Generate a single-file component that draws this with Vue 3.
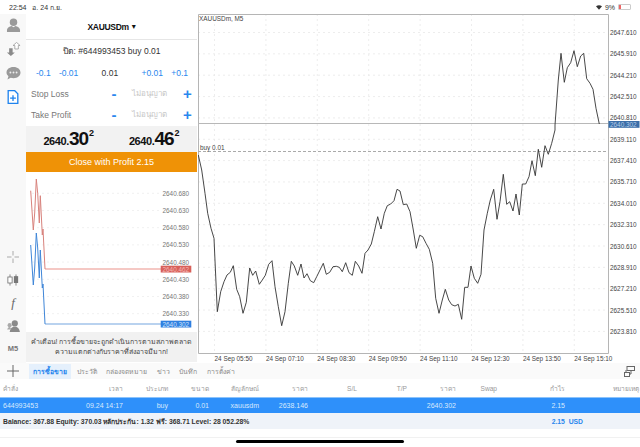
<script setup>
const z6 = [[10,75],[20,120],[30,190],[38,250],[48,295],[57,325],[67,545],[77,485],[87,455],[96,435],[106,427],[115,407],[125,478],[134,500],[144,550],[154,517],[164,414],[173,436],[182,423],[193,463],[202,450],[211,436],[221,403],[231,392],[240,470],[250,530],[260,587],[270,545],[280,460],[289,394],[298,408],[308,436],[318,402],[327,444],[336,431],[346,452],[356,458],[365,440],[385,400],[394,433],[404,427],[414,410],[424,409],[433,412],[442,425],[452,398],[462,428],[472,436],[481,394],[491,408],[501,430],[510,370],[519,360],[529,342],[538,305],[548,260],[558,297],[568,250],[577,227],[587,222],[597,212],[606,178],[615,183],[625,224],[635,222],[645,245]]
const z7 = [[10,300],[19,355],[29,316],[38,320],[48,340],[58,358],[68,400],[77,505],[87,550],[97,510],[106,478],[116,510],[125,524],[135,528],[145,523],[155,568],[164,472],[174,472],[183,408],[193,445],[203,460],[213,433],[222,300],[232,250],[241,210],[251,178],[261,268],[270,215],[280,133],[290,223],[299,215],[309,243],[318,192],[328,255],[337,162],[347,162],[357,140],[366,92],[376,137],[385,58],[395,112],[405,47],[415,73],[425,40],[435,0]]
const z5 = [[225,375],[235,240],[243,160],[253,247],[262,203],[272,188],[282,152],[292,200],[302,168],[311,160],[320,236],[330,250],[339,268],[348,325],[358,372]]
const fmt = (x, y) => `${(x - 198).toFixed(1)},${(y - 14).toFixed(1)}`
const pricePath = [
  ...z6.map(([x, y]) => fmt(195 + x / 3, 130 + y / 3)),
  ...z7.map(([x, y]) => fmt(410 + x / 3, 130 + y / 3)),
  ...z5.map(([x, y]) => fmt(480 + x / 3, y / 3))
].join(' ')
const priceLabels = ['2647.610','2645.910','2644.210','2642.510','2640.810','2639.110','2637.410','2635.710','2634.010','2632.310','2630.610','2628.910','2627.210','2625.510','2623.810']
  .map((t, i) => ({ t, y: 18.5 + i * 21.35 }))
const timeLabels = ['05:50','07:10','08:30','09:50','11:10','12:30','13:50','15:10']
  .map((t, i) => ({ t: `24 Sep ${t}`, x: 16.5 + i * 51.4 }))
const miniLabels = ['2640.680','2640.630','2640.580','2640.530','2640.480','2640.430','2640.380','2640.330']
  .map((t, i) => ({ t, y: 21.3 + i * 17.2 }))
const redLine = '5.7,18.7 8.3,58 9.7,41 11.3,7 12.7,21.3 14.3,51 15.3,23.7 17.3,63 18,57 20,97'
const blueLine = '5.7,73 8.3,113 9.7,96 11.3,61 12.7,76 14.3,106 15.3,78 17.3,116 18,112 20,152'
const headers = ['คำสั่ง','เวลา','ประเภท','ขนาด','สัญลักษณ์','ราคา','S/L','T/P','ราคา','Swap','กำไร','หมายเหตุ']
const row = ['644993453', '09.24 14:17', 'buy', '0.01', 'xauusdm', '2638.146', '', '', '2640.302', '', '2.15', '']
const rights = [60, 123, 168, 209, 259, 308, 357, 407, 456, 497, 565, 639]
const colStyle = (i) => ({ width: `${rights[i] - (i === 0 ? 0 : rights[i - 1])}px` })
const tabs = ['การซื้อขาย', 'ประวัติ', 'กล่องจดหมาย', 'ข่าว', 'บันทึก', 'การตั้งค่า']
</script>

<template>
  <div class="page">
    <div class="status">
      <span class="st-left">22:54&nbsp;&nbsp; อ. 24 ก.ย.</span>
      <span class="st-right">
        <svg width="6" height="5" viewBox="0 0 8 6"><path d="M0 1.2 Q4 -1 8 1.2 L4 6Z" fill="#333"/></svg>
        <span>9%</span>
        <span class="batt"><i></i></span>
      </span>
    </div>
    <div class="main">
      <div class="rail">
        <div class="rail-top">
          <svg width="15" height="14" viewBox="0 0 16 15"><circle cx="8" cy="4.5" r="4" fill="#9a9a9a"/><path d="M1 15 V12.5 Q2 9 6 8.5 L8 10 L10 8.5 Q14 9 15 12.5 V15Z" fill="#9a9a9a"/></svg>
          <svg width="15" height="14" viewBox="0 0 16 16"><path d="M3 7 V12 H0.5 L5 16 L9.5 12 H7 V7Z" fill="#8a8a8a"/><path d="M9.5 8 V4 H7.5 L11.5 0.5 L15.5 4 H13.5 V8Z" fill="#fff" stroke="#999" stroke-width=".9"/></svg>
          <svg width="15" height="14" viewBox="0 0 16 15"><path d="M8 1 C12.5 1 15.5 3.5 15.5 7 C15.5 10.5 12.5 13 8 13 C7 13 6 12.9 5 12.6 L1.5 14.5 L2.6 11 C1.2 9.8 .5 8.5 .5 7 C.5 3.5 3.5 1 8 1Z" fill="#9a9a9a"/><circle cx="4.7" cy="7" r="1" fill="#eee"/><circle cx="8" cy="7" r="1" fill="#eee"/><circle cx="11.3" cy="7" r="1" fill="#eee"/></svg>
          <svg width="12" height="14" viewBox="0 0 13 16"><path d="M1 .8 H8.5 L12 4.3 V15.2 H1Z" fill="#fff" stroke="#1f83ee" stroke-width="1.5"/><path d="M6.5 6 V12.5 M3.2 9.2 H9.8" stroke="#1f83ee" stroke-width="1.5"/></svg>
        </div>
        <div class="rail-bot">
          <svg width="12" height="12" viewBox="0 0 12 12"><path d="M6 0 V4.5 M6 7.5 V12 M0 6 H4.5 M7.5 6 H12" stroke="#aaa" stroke-width="1"/></svg>
          <svg width="12" height="12" viewBox="0 0 14 13"><path d="M3.5 0 V13" stroke="#777"/><rect x="1" y="3" width="5" height="7" fill="#fff" stroke="#777"/><path d="M10.5 0 V13" stroke="#777"/><rect x="8" y="2" width="5" height="8" fill="#777"/></svg>
          <span class="fx">f</span>
          <svg width="13" height="12" viewBox="0 0 15 14"><circle cx="9" cy="4" r="3.6" fill="#8a8a8a"/><path d="M3 14 Q4 8 9 8 Q14 8 15 14Z" fill="#8a8a8a"/><circle cx="3" cy="6" r="2.4" fill="#aaa"/><path d="M0 11 Q1 8 3.5 8 L5 11Z" fill="#aaa"/></svg>
          <span class="m5">M5</span>
        </div>
      </div>
      <div class="panel">
        <div class="p-title"><b>XAUUSDm</b><span class="caret">▾</span></div>
        <div class="p-close">ปิด: #644993453 buy 0.01</div>
        <div class="p-vol">
          <span class="blue">-0.1</span><span class="blue">-0.01</span><span class="vol">0.01</span><span class="blue">+0.01</span><span class="blue">+0.1</span>
        </div>
        <div class="p-level"><span class="lab">Stop Loss</span><span class="sym minus">-</span><span class="na">ไม่อนุญาต</span><span class="sym">+</span></div>
        <div class="p-level"><span class="lab">Take Profit</span><span class="sym minus">-</span><span class="na">ไม่อนุญาต</span><span class="sym">+</span></div>
        <div class="quotes">
          <span class="q"><span class="qs">2640.</span><span class="qb">30</span><sup>2</sup></span>
          <span class="q"><span class="qs">2640.</span><span class="qb">46</span><sup>2</sup></span>
        </div>
        <div class="close-btn">Close with Profit 2.15</div>
        <div class="mini">
          <svg width="171" height="160" viewBox="1 0 171 160">
            <g stroke="#f1f1f1" stroke-dasharray="2 3">
              <path v-for="l in miniLabels" :key="l.t" :d="`M7 ${l.y} H135`"/>
            </g>
            <path d="M20 97 H136" stroke="#f5c8c4" stroke-width="2"/>
            <path d="M20 152 H136" stroke="#b9d2ef" stroke-width="2"/>
            <polyline :points="redLine" fill="none" stroke="#d8827c" stroke-width="1"/>
            <polyline :points="blueLine" fill="none" stroke="#3f86d8" stroke-width="1"/>
            <text v-for="l in miniLabels" :key="l.t" x="137.5" :y="l.y + 2.5" class="mini-t">{{ l.t }}</text>
            <rect x="135.7" y="93.7" width="30.6" height="6.8" fill="#d8605a"/>
            <text x="137.5" y="99.6" class="mini-t tag-r">2640.462</text>
            <rect x="135.7" y="148.7" width="30.6" height="6.8" fill="#2f7fe0"/>
            <text x="137.5" y="154.6" class="mini-t tag-b">2640.302</text>
          </svg>
        </div>
        <div class="warn">คำเตือน! การซื้อขายจะถูกดำเนินการตามสภาพตลาด<br>ความแตกต่างกับราคาที่ส่งอาจมีมาก!</div>
      </div>
      <div class="chart">
        <svg width="442" height="349" viewBox="0 0 442 349">
          <g stroke="#e8e8e8" stroke-dasharray="2 3" stroke-width=".8">
            <path v-for="l in priceLabels" :key="l.t" :d="`M0 ${l.y} H410`"/>
            <path v-for="l in timeLabels" :key="l.t" :d="`M${l.x} 0 V339`"/>
          </g>
          <path d="M0.5 339.5 V0.5 H410.5 V339.5 H0.5" fill="none" stroke="#b5b5b5"/>
          <path d="M0 109.5 H410" stroke="#b8b8b8"/>
          <path d="M0 137.5 H410" stroke="#aaa" stroke-dasharray="3 2"/>
          <polyline :points="pricePath" fill="none" stroke="#333" stroke-width=".9"/>
          <text x="1" y="7" class="ct">XAUUSDm, M5</text>
          <text x="2" y="136" class="ct">buy 0.01</text>
          <text v-for="l in priceLabels" :key="l.t" x="412" :y="l.y + 2.5" class="ct">{{ l.t }}</text>
          <rect x="410.5" y="107" width="31" height="6.8" fill="#3a6ea8"/>
          <text x="412" y="113" class="ct w">2640.302</text>
          <text v-for="l in timeLabels" :key="l.t" :x="l.x" y="347" class="ct">{{ l.t }}</text>
        </svg>
      </div>
    </div>
    <div class="tabs">
      <svg class="plus" width="14" height="14" viewBox="0 0 14 14"><path d="M7 1 V13 M1 7 H13" stroke="#666" stroke-width="1"/></svg>
      <span v-for="(t, i) in tabs" :key="t" class="tab" :class="{ on: i === 0 }">{{ t }}</span>
      <svg class="ic-r" width="11" height="11" viewBox="0 0 11 11"><rect x="3" y=".5" width="7.5" height="4" fill="none" stroke="#666"/><rect x=".5" y="6.5" width="5" height="4" fill="none" stroke="#666"/><path d="M2 6 V4 M7 5 V8 H5.5" stroke="#666" fill="none"/></svg>
    </div>
    <div class="thead">
      <span v-for="(h, i) in headers" :key="i" class="cell" :class="{ first: i === 0 }" :style="colStyle(i)">{{ h }}</span>
    </div>
    <div class="trow">
      <span v-for="(c, i) in row" :key="i" class="cell" :class="{ first: i === 0 }" :style="colStyle(i)">{{ c }}</span>
    </div>
    <div class="bal">
      <span>Balance: 367.88 Equity: 370.03 หลักประกัน: 1.32 ฟรี: 368.71 Level: 28 052.28%</span>
      <span class="bal-r">2.15&nbsp; USD</span>
    </div>
    <div class="home-wrap"><div class="home"></div></div>
  </div>
</template>

<style>
html, body { margin: 0; background: #fff; }
</style>

<style scoped>
.page {
  width: 640px; height: 447px; overflow: hidden; display: flex; flex-direction: column;
  font-family: "Liberation Sans", "Noto Sans", "DejaVu Sans", sans-serif; background: #fff; color: #333;
}
.status { height: 14px; flex: none; display: flex; justify-content: space-between; align-items: center; font-size: 7px; padding: 0 9px 0 9px; color: #333; box-sizing: border-box; }
.st-right { display: flex; align-items: center; gap: 3px; }
.batt { border: 1px solid #ccc; border-radius: 1px; display: block; box-sizing: border-box; width: 13px; height: 6px; }
.batt i { display: block; width: 2px; height: 4px; background: #e66; }
.main { flex: none; height: 349px; display: flex; }
.rail { width: 26px; flex: none; background: #f8f8f8; display: flex; flex-direction: column; justify-content: space-between; align-items: center; padding: 4px 0 8px; box-sizing: border-box; }
.rail-top { display: flex; flex-direction: column; align-items: center; gap: 10px; }
.rail-bot { display: flex; flex-direction: column; align-items: center; gap: 11px; }
.rail-bot > * { height: 12px; display: block; }
.fx { font: italic 13px/12px "Liberation Serif", serif; color: #666; }
.m5 { font-size: 7.5px; line-height: 12px; font-weight: 700; color: #777; }
.panel { width: 171px; flex: none; display: flex; flex-direction: column; background: #fff; }
.p-title { height: 26px; flex: none; border-bottom: 1px solid #e6e6e6; display: flex; align-items: center; justify-content: center; gap: 3px; font-size: 8.5px; letter-spacing: -.3px; color: #111; box-sizing: border-box; }
.caret { font-size: 8px; }
.p-close { height: 22px; flex: none; display: flex; align-items: center; justify-content: center; font-size: 8.5px; color: #333; }
.p-vol { height: 21px; flex: none; display: flex; align-items: center; font-size: 8.5px; padding: 0 9px 0 10px; justify-content: space-between; }
.blue { color: #2a87ee; }
.vol { margin: 0 15px 0 15px; color: #333; }
.p-level { height: 21px; flex: none; display: flex; align-items: center; font-size: 8.5px; padding: 0 2px 0 5px; color: #777; }
.lab { width: 78px; }
.sym { color: #2a87ee; font-size: 15px; width: 15px; text-align: center; font-weight: 700; }
.minus { width: 10px; }
.na { flex: 1; text-align: center; color: #c6c6c6; font-size: 8px; }
.quotes { height: 26px; flex: none; background: #f2f2f2; display: grid; grid-template-columns: 1fr 1fr; align-items: center; justify-items: center; color: #111; margin-top: 1px; }
.q { display: flex; align-items: baseline; font-weight: 700; }
.qs { font-size: 11px; letter-spacing: -.4px; }
.qb { font-size: 19px; letter-spacing: -1px; }
.q sup { font-size: 9px; line-height: 1; align-self: flex-start; font-weight: 700; margin-left: 1px; margin-top: 1px; }
.close-btn { height: 20px; flex: none; background: #ef9206; color: #fff; font-size: 9px; display: flex; align-items: center; justify-content: center; }
.mini { height: 160px; flex: none; }
.mini svg { display: block; }
.mini-t { font-size: 6.4px; fill: #777; font-family: "Liberation Sans", sans-serif; }
.tag-r { fill: #f3b7b2; }
.tag-b { fill: #cfe2fa; }
.warn { height: 30px; flex: none; background: #f1f1f1; font-size: 7px; line-height: 10px; text-align: center; padding-top: 5px; box-sizing: border-box; color: #444; white-space: nowrap; }
.chart { flex: 1; padding-left: 1px; }
.chart svg { display: block; }
.ct { font-size: 6.4px; fill: #444; font-family: "Liberation Sans", sans-serif; }
.ct.w { fill: #b8cde6; }
.tabs { height: 16px; flex: none; display: flex; align-items: center; background: #fafafa; font-size: 6.9px; color: #8a8a8a; padding-left: 6px; }
.plus { margin-right: 9px; }
.tab { padding: 2px 4px; margin-right: 1.5px; }
.tab.on { background: #e5f0fc; color: #2a87ee; font-weight: 700; }
.ic-r { margin-left: auto; margin-right: 5px; }
.thead { height: 18px; flex: none; display: flex; align-items: center; font-size: 6.6px; color: #999; }
.trow { height: 16px; flex: none; display: flex; align-items: center; font-size: 7px; color: #d8e9fc; background: #2e90fa; border-top: 1px solid #8cc3fb; box-sizing: border-box; }
.cell { text-align: right; box-sizing: border-box; white-space: nowrap; }
.cell.first { text-align: left; padding-left: 3px; }
.bal { height: 16px; flex: none; display: flex; align-items: center; font-size: 6.8px; font-weight: 700; color: #333; background: #eff3f9; padding-left: 3px; }
.bal-r { margin-left: auto; margin-right: 57px; color: #2a87ee; }
.home-wrap { margin-top: 8px; flex: 1; display: flex; align-items: flex-start; justify-content: center; padding-top: 2px; border-top: 1px solid #f1f1f1; }
.home { width: 168px; height: 3px; background: #000; border-radius: 2px; }
</style>
